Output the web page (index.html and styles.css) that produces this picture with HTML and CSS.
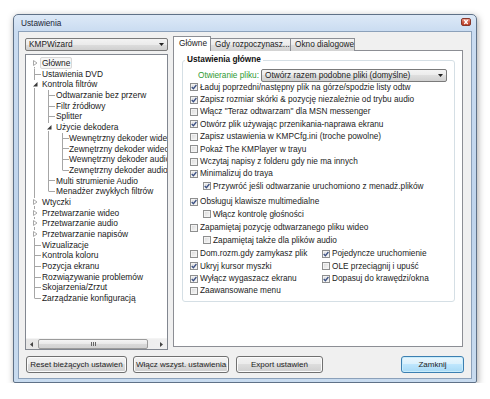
FILE: index.html
```html
<!DOCTYPE html>
<html>
<head>
<meta charset="utf-8">
<title>Ustawienia</title>
<link rel="stylesheet" href="styles.css">
</head>
<body>
<div class="window">
  <div class="titlebar">
    <span class="title">Ustawienia</span>
    <span class="close"><svg width="8" height="6" viewBox="0 0 8 6"><path d="M2.3 1 L5.7 5 M5.7 1 L2.3 5" stroke="#fff" stroke-width="1.3"/></svg></span>
  </div>
  <div class="client">
    <div class="main">
      <div class="left">
        <div class="combo combo-left"><span class="ctext">KMPWizard</span><svg class="arr" width="5" height="3" viewBox="0 0 5 3"><path d="M0 0 H5 L2.5 3 Z" fill="#222"/></svg></div>
        <div class="tree">
          <div class="rows">
            <div class="row v0s"><span class="exp"><svg width="8" height="8" viewBox="0 0 8 8"><path d="M2.5 1.5 L6 4 L2.5 6.5 Z" fill="#fff" stroke="#a8a8a8"/></svg></span><span class="selitem">Główne</span></div>
            <div class="row v0 h0">Ustawienia DVD</div>
            <div class="row v0"><span class="exp"><svg width="8" height="8" viewBox="0 0 8 8"><path d="M6.5 2 L6.5 6.5 L2 6.5 Z" fill="#3a3a3a"/></svg></span>Kontrola filtrów</div>
            <div class="row l1 v0 v1 h1">Odtwarzanie bez przerw</div>
            <div class="row l1 v0 v1 h1">Filtr źródłowy</div>
            <div class="row l1 v0 v1 h1">Splitter</div>
            <div class="row l1 v0 v1"><span class="exp"><svg width="8" height="8" viewBox="0 0 8 8"><path d="M6.5 2 L6.5 6.5 L2 6.5 Z" fill="#3a3a3a"/></svg></span>Użycie dekodera</div>
            <div class="row l2 v0 v1 v2 h2">Wewnętrzny dekoder wideo</div>
            <div class="row l2 v0 v1 v2 h2">Zewnętrzny dekoder wideo</div>
            <div class="row l2 v0 v1 v2 h2">Wewnętrzny dekoder audio</div>
            <div class="row l2 v0 v1 v2e h2">Zewnętrzny dekoder audio</div>
            <div class="row l1 v0 v1 h1">Multi strumienie Audio</div>
            <div class="row l1 v0 v1e h1">Menadżer zwykłych filtrów</div>
            <div class="row v0"><span class="exp"><svg width="8" height="8" viewBox="0 0 8 8"><path d="M2.5 1.5 L6 4 L2.5 6.5 Z" fill="#fff" stroke="#a8a8a8"/></svg></span>Wtyczki</div>
            <div class="row v0"><span class="exp"><svg width="8" height="8" viewBox="0 0 8 8"><path d="M2.5 1.5 L6 4 L2.5 6.5 Z" fill="#fff" stroke="#a8a8a8"/></svg></span>Przetwarzanie wideo</div>
            <div class="row v0"><span class="exp"><svg width="8" height="8" viewBox="0 0 8 8"><path d="M2.5 1.5 L6 4 L2.5 6.5 Z" fill="#fff" stroke="#a8a8a8"/></svg></span>Przetwarzanie audio</div>
            <div class="row v0"><span class="exp"><svg width="8" height="8" viewBox="0 0 8 8"><path d="M2.5 1.5 L6 4 L2.5 6.5 Z" fill="#fff" stroke="#a8a8a8"/></svg></span>Przetwarzanie napisów</div>
            <div class="row v0 h0">Wizualizacje</div>
            <div class="row v0 h0">Kontrola koloru</div>
            <div class="row v0 h0">Pozycja ekranu</div>
            <div class="row v0 h0">Rozwiązywanie problemów</div>
            <div class="row v0 h0">Skojarzenia/Zrzut</div>
            <div class="row v0e h0">Zarządzanie konfiguracją</div>
          </div>
          <div class="hscroll">
            <span class="sbtn"><svg width="3" height="5" viewBox="0 0 3 5"><path d="M3 0 V5 L0 2.5 Z" fill="#444"/></svg></span>
            <span class="track"><span class="thumb"><span class="grip"></span></span></span>
            <span class="sbtn"><svg width="3" height="5" viewBox="0 0 3 5"><path d="M0 0 V5 L3 2.5 Z" fill="#444"/></svg></span>
          </div>
        </div>
      </div>
      <div class="right">
        <div class="tabs">
          <div class="tab sel t1">Główne</div>
          <div class="tab t2">Gdy rozpoczynasz...</div>
          <div class="tab t3">Okno dialogowe</div>
        </div>
        <div class="panel">
          <fieldset class="group">
            <legend>Ustawienia główne</legend>
            <div class="open-row">
              <span class="green">Otwieranie pliku:</span>
              <div class="combo combo-file"><span class="ctext">Otwórz razem podobne pliki (domyślne)</span><svg class="arr" width="5" height="3" viewBox="0 0 5 3"><path d="M0 0 H5 L2.5 3 Z" fill="#222"/></svg></div>
            </div>
            <div class="chk"><span class="cb"><svg width="6" height="6" viewBox="0 0 6 6"><path d="M0.7 3 L2.4 4.7 L5.4 1" stroke="#3c5184" stroke-width="1.3" fill="none"/></svg></span>Ładuj poprzedni/następny plik na górze/spodzie listy odtw</div>
            <div class="chk"><span class="cb"><svg width="6" height="6" viewBox="0 0 6 6"><path d="M0.7 3 L2.4 4.7 L5.4 1" stroke="#3c5184" stroke-width="1.3" fill="none"/></svg></span>Zapisz rozmiar skórki &amp; pozycję niezależnie od trybu audio</div>
            <div class="chk"><span class="cb"></span>Włącz "Teraz odtwarzam" dla MSN messenger</div>
            <div class="chk"><span class="cb"><svg width="6" height="6" viewBox="0 0 6 6"><path d="M0.7 3 L2.4 4.7 L5.4 1" stroke="#3c5184" stroke-width="1.3" fill="none"/></svg></span>Otwórz plik używając przenikania-naprawa ekranu</div>
            <div class="chk"><span class="cb"></span>Zapisz ustawienia w KMPCfg.ini (troche powolne)</div>
            <div class="chk"><span class="cb"></span>Pokaż The KMPlayer w trayu</div>
            <div class="chk"><span class="cb"></span>Wczytaj napisy z folderu gdy nie ma innych</div>
            <div class="chk"><span class="cb"><svg width="6" height="6" viewBox="0 0 6 6"><path d="M0.7 3 L2.4 4.7 L5.4 1" stroke="#3c5184" stroke-width="1.3" fill="none"/></svg></span>Minimalizuj do traya</div>
            <div class="chk ind"><span class="cb"><svg width="6" height="6" viewBox="0 0 6 6"><path d="M0.7 3 L2.4 4.7 L5.4 1" stroke="#3c5184" stroke-width="1.3" fill="none"/></svg></span>Przywróć jeśli odtwarzanie uruchomiono z menadż.plików</div>
            <div class="chk gap3"><span class="cb"><svg width="6" height="6" viewBox="0 0 6 6"><path d="M0.7 3 L2.4 4.7 L5.4 1" stroke="#3c5184" stroke-width="1.3" fill="none"/></svg></span>Obsługuj klawisze multimedialne</div>
            <div class="chk ind"><span class="cb"></span>Włącz kontrolę głośności</div>
            <div class="chk gap15"><span class="cb"></span>Zapamiętaj pozycję odtwarzanego pliku wideo</div>
            <div class="chk ind"><span class="cb"></span>Zapamiętaj także dla plików audio</div>
            <div class="grid2">
              <div class="chk"><span class="cb"></span>Dom.rozm.gdy zamykasz plik</div>
              <div class="chk"><span class="cb"><svg width="6" height="6" viewBox="0 0 6 6"><path d="M0.7 3 L2.4 4.7 L5.4 1" stroke="#3c5184" stroke-width="1.3" fill="none"/></svg></span>Pojedyncze uruchomienie</div>
              <div class="chk"><span class="cb"><svg width="6" height="6" viewBox="0 0 6 6"><path d="M0.7 3 L2.4 4.7 L5.4 1" stroke="#3c5184" stroke-width="1.3" fill="none"/></svg></span>Ukryj kursor myszki</div>
              <div class="chk"><span class="cb"></span>OLE przeciągnij i upuść</div>
              <div class="chk"><span class="cb"><svg width="6" height="6" viewBox="0 0 6 6"><path d="M0.7 3 L2.4 4.7 L5.4 1" stroke="#3c5184" stroke-width="1.3" fill="none"/></svg></span>Wyłącz wygaszacz ekranu</div>
              <div class="chk"><span class="cb"><svg width="6" height="6" viewBox="0 0 6 6"><path d="M0.7 3 L2.4 4.7 L5.4 1" stroke="#3c5184" stroke-width="1.3" fill="none"/></svg></span>Dopasuj do krawędzi/okna</div>
              <div class="chk"><span class="cb"></span>Zaawansowane menu</div>
            </div>
          </fieldset>
        </div>
      </div>
    </div>
    <div class="buttons">
      <div class="btn b-reset">Reset bieżących ustawień</div>
      <div class="btn b-all">Włącz wszyst. ustawienia</div>
      <div class="btn b-export">Export ustawień</div>
      <div class="btn b-close">Zamknij</div>
    </div>
  </div>
</div>
</body>
</html>
```

FILE: styles.css
```css
* { box-sizing: border-box; }
html, body { margin: 0; padding: 0; background: #fff; }
body {
  font-family: "Liberation Sans", Arial, sans-serif;
  font-size: 8.25px;
  color: #1c1c1c;
}

.window {
  margin: 14px 0 0 13px;
  width: 464px;
  height: 369px;
  border: 1px solid #5f7187;
  border-radius: 5px 5px 2px 2px;
  background: linear-gradient(#dde9f7, #cadcf1 16px, #bfd4ec 55%, #c8dbef);
  box-shadow: 1px 2px 7px rgba(0,0,0,0.35);
  padding: 0 4px 3px 4px;
  display: flex;
  flex-direction: column;
}

.titlebar {
  height: 16px;
  display: flex;
  align-items: center;
  justify-content: space-between;
  padding: 0 1px 0 3px;
}
.title { color: #1b2636; }
.close {
  width: 10px;
  height: 8px;
  margin-top: -2px;
  border: 1px solid #86362a;
  border-radius: 2px;
  background: linear-gradient(#eea394, #d05a44 50%, #b83a22);
  display: flex;
  align-items: center;
  justify-content: center;
}
.close svg { display: block; }

.client {
  flex: 1;
  background: #f0f0f0;
  border: 1px solid #8ca1ba;
  padding: 5px 8px 5px 6px;
  display: flex;
  flex-direction: column;
}

.main {
  display: flex;
  gap: 5px;
  height: 313px;
}

.left {
  width: 143px;
  display: flex;
  flex-direction: column;
}

.combo {
  height: 13px;
  border: 1px solid #7a7a7a;
  border-radius: 2px;
  background: linear-gradient(#f3f3f3, #ebebeb 50%, #dedede 50%, #d0d0d0);
  display: flex;
  align-items: center;
  justify-content: space-between;
  padding: 0 3px 0 3px;
  white-space: nowrap;
}
.combo .arr { display: block; flex: none; }
.combo-left { margin-top: 1px; }
.combo-file { width: 186px; margin-left: 3px; }

.tree {
  margin-top: 3px;
  height: 296px;
  border: 1px solid #828790;
  background: #fff;
  display: flex;
  flex-direction: column;
  overflow: hidden;
}
.rows {
  flex: 1;
  padding-top: 3px;
  overflow: hidden;
  color: #1a1a1a;
  font-size: 8.4px;
}
.row {
  height: 10.7px;
  line-height: 10.7px;
  white-space: nowrap;
  padding-left: 16px;
  background: var(--a, none), var(--b, none), var(--c, none), var(--d, none);
}
.row.l1 { padding-left: 30px; }
.row.l2 { padding-left: 43px; }

.v0  { --a: linear-gradient(#a6a6a6, #a6a6a6) 8px 0 / 1px 100% no-repeat; }
.v0s { --a: linear-gradient(#a6a6a6, #a6a6a6) 8px 100% / 1px 50% no-repeat; }
.v0e { --a: linear-gradient(#a6a6a6, #a6a6a6) 8px 0 / 1px 50% no-repeat; }
.v1  { --b: linear-gradient(#a6a6a6, #a6a6a6) 22px 0 / 1px 100% no-repeat; }
.v1e { --b: linear-gradient(#a6a6a6, #a6a6a6) 22px 0 / 1px 50% no-repeat; }
.v2  { --c: linear-gradient(#a6a6a6, #a6a6a6) 36px 0 / 1px 100% no-repeat; }
.v2e { --c: linear-gradient(#a6a6a6, #a6a6a6) 36px 0 / 1px 50% no-repeat; }
.h0  { --d: linear-gradient(#a6a6a6, #a6a6a6) 9px 50% / 6px 1px no-repeat; }
.h1  { --d: linear-gradient(#a6a6a6, #a6a6a6) 23px 50% / 6px 1px no-repeat; }
.h2  { --d: linear-gradient(#a6a6a6, #a6a6a6) 37px 50% / 6px 1px no-repeat; }

.exp {
  display: inline-block;
  width: 8px;
  height: 8px;
  margin-left: -11px;
  margin-right: 3px;
  vertical-align: -1px;
  background: #fff;
}
.exp svg { display: block; }
.selitem {
  border: 1px solid #d8d8d8;
  background: #f6f6f6;
  border-radius: 2px;
  padding: 0 1px;
  margin-left: -2px;
}

.hscroll {
  height: 11px;
  display: flex;
  background: linear-gradient(90deg, #e6e6e6, #f0f0f0);
  border-top: 1px solid #f4f4f4;
}
.sbtn {
  width: 11px;
  display: flex;
  align-items: center;
  justify-content: center;
}
.sbtn svg { display: block; }
.track {
  flex: 1;
  display: flex;
  padding: 0 8px 0 1px;
}
.thumb {
  flex: 1;
  border: 1px solid #9b9b9b;
  border-radius: 2px;
  background: linear-gradient(#f5f5f5, #e9e9e9 50%, #d9d9d9 50%, #d2d2d2);
  display: flex;
  align-items: center;
  justify-content: center;
}
.grip {
  width: 5px;
  height: 4px;
  background: repeating-linear-gradient(90deg, #666 0 1px, transparent 1px 2px);
}

.right {
  width: 290px;
  display: flex;
  flex-direction: column;
}
.tabs {
  height: 14px;
  display: flex;
  align-items: flex-end;
  position: relative;
  z-index: 1;
  margin-bottom: -1px;
}
.tab {
  height: 13px;
  line-height: 12px;
  border: 1px solid #8c8e94;
  border-bottom: none;
  padding: 0 4px;
  background: linear-gradient(#f3f3f3, #ebebeb 50%, #dddddd 50%, #d3d3d3);
  white-space: nowrap;
  margin-left: -1px;
}
.tab.sel {
  height: 15px;
  line-height: 14px;
  background: #fff;
  margin-left: 0;
  padding: 0 5px;
}
.t1 { width: 38px; }
.t2 { width: 81px; }
.t3 { width: 65px; }

.panel {
  flex: none;
  height: 297px;
  border: 1px solid #8c8e94;
  background: #fff;
  padding: 4px 7px 0 8px;
}

.group {
  margin: 0;
  border: 1px solid #d5dfe5;
  border-radius: 3px;
  padding: 4px 4px 4px 7px;
  min-width: 0;
}
.group legend {
  font-weight: bold;
  padding: 0 2px;
  margin-left: -5px;
  line-height: 10px;
  color: #111;
}

.open-row {
  height: 12px;
  display: flex;
  align-items: center;
  padding-left: 8px;
}
.green { color: #2f9a32; width: 60px; white-space: nowrap; }

.chk {
  height: 12.4px;
  display: flex;
  align-items: center;
  white-space: nowrap;
}
.chk.ind { padding-left: 13px; }
.chk.gap3 { margin-top: 3px; }
.chk.gap15 { margin-top: 1.5px; }
.cb {
  width: 8px;
  height: 8px;
  flex: none;
  margin-right: 2px;
  border: 1px solid #8e8f8f;
  background: linear-gradient(135deg, #d8d8d8, #f9f9f9);
  box-shadow: inset 0 0 0 1px #f3f3f3;
  display: flex;
  align-items: center;
  justify-content: center;
}
.cb svg { display: block; }

.grid2 {
  margin-top: 1px;
  display: grid;
  grid-template-columns: 132px auto;
}

.buttons {
  margin-top: 6px;
  height: 17px;
  display: flex;
}
.btn {
  height: 17px;
  border: 1px solid #707070;
  border-radius: 3px;
  background: linear-gradient(#f2f2f2, #ebebeb 50%, #dddddd 50%, #cfcfcf);
  box-shadow: inset 0 0 0 1px #fbfbfb;
  display: flex;
  align-items: center;
  justify-content: center;
  white-space: nowrap;
  font-size: 8px;
}
.b-reset { width: 101px; margin-left: 1px; }
.b-all { width: 96px; margin-left: 6px; }
.b-export { width: 87px; margin-left: 7px; }
.b-close {
  width: 63px;
  margin-left: auto;
  margin-right: -1px;
  border-color: #3c7fb1;
  background: linear-gradient(#eaf6fd, #d9f0fc 50%, #bee6fd 50%, #a7d9f5);
  box-shadow: inset 0 0 0 1px #c8ecfb;
}
```
